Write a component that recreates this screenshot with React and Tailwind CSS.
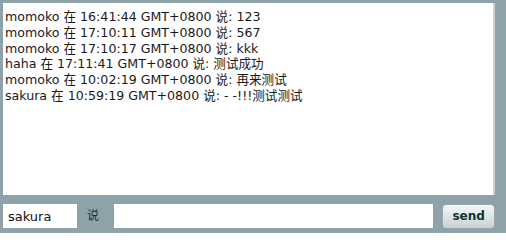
const messages = [
  "momoko 在 16:41:44 GMT+0800 说: 123",
  "momoko 在 17:10:11 GMT+0800 说: 567",
  "momoko 在 17:10:17 GMT+0800 说: kkk",
  "haha 在 17:11:41 GMT+0800 说: 测试成功",
  "momoko 在 10:02:19 GMT+0800 说: 再来测试",
  "sakura 在 10:59:19 GMT+0800 说: - -!!!测试测试",
];

export default function App() {
  return (
    <div
      className="w-[506px] h-[233px] bg-[#8ea2a9] flex flex-col pt-[3px] pl-[3px] pr-[11px]"
      style={{ fontFamily: '"DejaVu Sans", Verdana, "Noto Sans CJK SC", sans-serif' }}
    >
      {/* chat log */}
      <div className="h-[192px] bg-white border-r-[2px] border-[#c9d3d6] px-[2px] pt-[6px] text-[12.6px] leading-[15.8px] text-[#1a1a1a]">
        {messages.map((m, i) => (
          <div key={i} className="whitespace-nowrap">{m}</div>
        ))}
      </div>

      {/* input row */}
      <div className="flex items-center mt-[9px] h-[24px]">
        <input
          defaultValue="sakura"
          className="w-[74px] h-[24px] bg-white px-[5px] text-[13px] text-[#111] outline-none"
        />
        <span className="ml-[10px] mr-[15px] text-[12px] text-[#1c2a33]">说</span>
        <input className="w-[321px] h-[24px] bg-white outline-none" />
        <button className="ml-[9px] w-[53px] h-[25px] rounded-[4px] border border-[#9aa8ad] bg-gradient-to-b from-[#f4f6f6] to-[#c9d2d4] text-[12px] font-bold text-[#113333]">
          send
        </button>
      </div>
    </div>
  );
}
